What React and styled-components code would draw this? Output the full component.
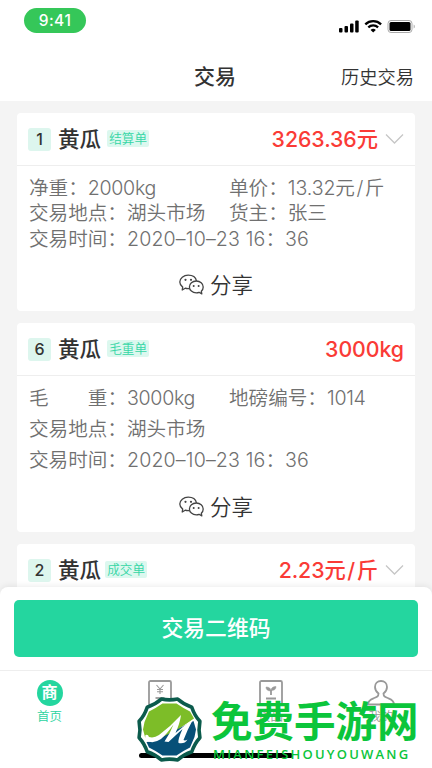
import React from 'react';
import styled, { createGlobalStyle } from 'styled-components';

const GlobalStyle = createGlobalStyle`
  * {
    box-sizing: border-box;
  }

  body {
    margin: 0;
    background: #f4f4f4;
    font-family: Inter, "Noto Sans CJK SC", sans-serif;
  }
`;

const Screen = styled.div`
  position: relative;
  width: 432px;
  height: 768px;
  overflow: hidden;
  display: flex;
  flex-direction: column;
  background: #f4f4f4;
`;

const Num = styled.span`
  letter-spacing: ${({ $spacing }) => $spacing || '-0.4px'};
`;

const Slash = styled.span`
  margin: 0 ${({ $gap }) => $gap || '1.5px'};
`;

const StatusBar = styled.div`
  flex: none;
  height: 52px;
  padding: 8px 16px 0 24px;
  display: flex;
  justify-content: space-between;
  align-items: flex-start;
  background: #fff;
`;

const Time = styled.div`
  width: 62px;
  height: 25px;
  border-radius: 13px;
  background: #35c759;
  color: #fff;
  font-size: 15.5px;
  font-weight: 500;
  line-height: 26px;
  letter-spacing: 0.5px;
  text-align: center;
`;

const StatusIcons = styled.svg`
  display: block;
  margin-top: 10px;
`;

const Header = styled.header`
  flex: none;
  height: 49px;
  padding: 0 18px;
  display: grid;
  grid-template-columns: 1fr auto 1fr;
  align-items: center;
  background: #fff;
  color: #333;
`;

const Title = styled.h1`
  grid-column: 2;
  margin: 0 2px 0 0;
  font-size: 21px;
  font-weight: 500;
  line-height: 30px;
`;

const History = styled.span`
  justify-self: end;
  font-size: 18.3px;
  font-weight: 350;
  line-height: 30px;
`;

const List = styled.main`
  flex: 1;
  min-height: 0;
  padding: 12px 17px 0;
  display: flex;
  flex-direction: column;
  gap: 12px;
  overflow: hidden;
`;

const Card = styled.section`
  flex: none;
  height: ${({ $height }) => $height}px;
  border-radius: 4px;
  background: #fff;
`;

const CardHead = styled.div`
  height: 53px;
  padding: 0 11px;
  display: flex;
  align-items: center;
  border-bottom: 1px solid #eee;
`;

const Index = styled.span`
  width: 23px;
  height: 23px;
  margin-right: 7px;
  border-radius: 3px;
  background: #ddf6ee;
  color: #333;
  font-size: 16px;
  font-weight: 500;
  line-height: 23px;
  text-align: center;
`;

const Name = styled.span`
  color: #333;
  font-size: 21.6px;
  font-weight: 500;
  line-height: 30px;
`;

const Tag = styled.span`
  height: 17px;
  margin: 0 0 2px ${({ $gap }) => $gap || 6}px;
  padding: 0 2px;
  border-radius: 2px;
  background: #dcf8ef;
  color: #35d6a5;
  font-size: 12.6px;
  font-weight: 350;
  line-height: 17px;
`;

const Price = styled.span`
  margin-left: auto;
  color: #fa3b36;
  font-size: 21.3px;
  font-weight: 500;
  line-height: 30px;
`;

const Arrow = styled.svg`
  margin-left: 7px;
`;

const Details = styled.div`
  padding: ${({ $pad }) => $pad}px 12px 0;
  color: #707070;
  font-size: 19.6px;
  font-weight: 350;
  line-height: ${({ $line }) => $line}px;
`;

const Row = styled.div`
  display: grid;
  grid-template-columns: 200px 1fr;
  white-space: nowrap;
`;

const Justified = styled.span`
  display: inline-flex;
  justify-content: space-between;
  width: 78.4px;
`;

const Share = styled.div`
  margin-top: ${({ $top }) => $top}px;
  height: 30px;
  display: flex;
  justify-content: center;
  align-items: center;
  gap: 6px;
  color: #333;
  font-size: 21.5px;
  font-weight: 350;
  line-height: 30px;
`;

const Footer = styled.footer`
  position: relative;
  flex: none;
  height: 181px;
  border-radius: 8px 8px 0 0;
  background: #fff;
  box-shadow: 0 -1px 6px rgba(0, 0, 0, 0.08);
`;

const ButtonArea = styled.div`
  height: 84px;
  padding: 13px 14px 0;
  border-bottom: 1px solid #eee;
`;

const QrButton = styled.button`
  display: block;
  width: 100%;
  height: 57px;
  padding: 0;
  border: 0;
  border-radius: 5px;
  background: #24d69f;
  color: #fff;
  font-family: inherit;
  font-size: 21.8px;
  font-weight: 500;
  line-height: 57px;
`;

const Tabs = styled.nav`
  padding: 9px 0 0;
  display: grid;
  grid-template-columns: 99px 122px 99px 122px;
`;

const Tab = styled.div`
  display: flex;
  flex-direction: column;
  align-items: center;
  color: ${({ $active }) => ($active ? '#2bd3a0' : '#999')};
  font-size: 12.5px;
  font-weight: 350;
  line-height: 18px;

  svg {
    display: block;
    margin-bottom: 2px;
  }
`;

const Badge = styled.span`
  width: 26px;
  height: 26px;
  margin-bottom: 2px;
  border-radius: 50%;
  background: #24d69f;
  color: #fff;
  font-size: 16px;
  font-weight: 700;
  line-height: 25px;
  text-align: center;
`;

const HomeBar = styled.div`
  position: absolute;
  left: 139px;
  bottom: 10px;
  width: 154px;
  height: 5px;
  border-radius: 3px;
  background: #000;
`;

const Watermark = styled.div`
  position: absolute;
  left: 136px;
  bottom: 6px;
  display: flex;
  align-items: flex-start;
  gap: 10px;
`;

const WatermarkText = styled.div`
  display: flex;
  flex-direction: column;
  color: #0bc53b;
  white-space: nowrap;
`;

const SiteName = styled.span`
  height: 49px;
  margin-left: -2px;
  font-family: "Noto Sans CJK SC", sans-serif;
  font-size: 41.5px;
  font-weight: 700;
  line-height: 45px;
`;

const SitePinyin = styled.span`
  font-family: "Open Sans", sans-serif;
  font-size: 13px;
  font-weight: 600;
  line-height: 16px;
  letter-spacing: 2.2px;
`;

const Chevron = () => (
  <Arrow width="19" height="12" viewBox="0 0 19 12" fill="none" stroke="#c6c6c6" strokeWidth="1.3">
    <path d="M1 1.5 9.5 10 18 1.5" />
  </Arrow>
);

const WechatIcon = () => (
  <svg width="25" height="22" viewBox="0 0 25 22" fill="none" stroke="#444" strokeWidth="1.3" strokeLinejoin="round">
    <path d="M10.500 14.600c-1.500.2-3 .1-4.300-.4L3.200 16l.5-2.900C1.900 11.800.8 10 .8 8 .8 4.200 4.600 1.200 9.200 1.200c4.200 0 7.600 2.300 8.300 5.700" />
    <path d="M17.300 7c-3.900 0-6.900 2.600-6.900 5.900s3 5.900 6.900 5.900c1 0 2-.2 2.800-.5l2.700 1.600-.5-2.700c1.200-1.100 1.900-2.600 1.900-4.300C24.200 9.600 21.200 7 17.300 7z" />
    <g fill="#444" stroke="none">
      <circle cx="6.500" cy="5.800" r="1.100" />
      <circle cx="12" cy="5.800" r="1.100" />
      <circle cx="14.700" cy="12" r="1" />
      <circle cx="19.600" cy="12" r="1" />
    </g>
  </svg>
);

const ShareRow = ({ top }) => (
  <Share $top={top}>
    <WechatIcon />
    <span>分享</span>
  </Share>
);

const CardTop = ({ index, tag, tagGap, children, arrow }) => (
  <CardHead>
    <Index>{index}</Index>
    <Name>黄瓜</Name>
    <Tag $gap={tagGap}>{tag}</Tag>
    <Price>{children}</Price>
    {arrow && <Chevron />}
  </CardHead>
);

const Logo = () => (
  <svg width="67" height="65" viewBox="-33.500 -32.500 67 65">
    <path
      d="M30.400 8.200Q25 14 22.300 22.300Q14.300 25 8.200 30.400Q0 28.800-8.200 30.400Q-14.300 25-22.300 22.300Q-25 14-30.400 8.200Q-28.800 0-30.400-8.200Q-25-14-22.300-22.300Q-14.300-25-8.200-30.400Q0-28.800 8.200-30.400Q14.300-25 22.300-22.300Q25-14 30.400-8.200Q28.800 0 30.400 8.200Z"
      fill="#fff"
      stroke="#0b5b4c"
      strokeWidth="3.600"
      strokeLinejoin="round"
    />
    <path d="M-24.500 7.500-26.500 0-25-7.500-20.500-18-14-21.500-7-26H7l7 4.500 6.500 3.500 4 7-22 15-14 13z" fill="#7dbd28" />
    <path d="M24-8.500 26.500 0 25 7.500 20.500 18 14 21.500 7 26H-7l-7-4.500-6.500-3.500-2.500-5.500q8 0 14-4z" fill="#075078" />
    <path
      d="M-24 5.500q2.500-1 3.500 2 5 1.500 10-2Q1-3 11.500-14.500q-1 8-5.500 18 8-7 17.500-13.500Q18 0 14 10.500q1.500 1 4-.5-3 5-9 3.500-1-3 4-14Q7 5-1 12.500l-4-.5Q1 3 4-5-3 5-8.500 9.500-16 14.500-22 11.500-25 9-24 5.500Z"
      fill="#fff"
    />
  </svg>
);

const App = () => {
  return (
    <Screen>
      <GlobalStyle />
      <StatusBar>
        <Time>9:41</Time>
        <StatusIcons width="78" height="16" viewBox="0 0 78 16">
          <rect x="1" y="10" width="3.500" height="4.500" rx="1" />
          <rect x="6.500" y="8" width="3.500" height="6.500" rx="1" />
          <rect x="12" y="5.500" width="3.500" height="9" rx="1" />
          <rect x="17.200" y="2.500" width="3.500" height="12" rx="1" />
          <g fill="none" stroke="#000" strokeWidth="2.300">
            <path d="M27.300 6.300c4.500-4.200 11.300-4.200 15.800 0" />
            <path d="M30.300 9.400c2.800-2.600 7-2.600 9.800 0" />
          </g>
          <path d="m35.200 14.500-2.600-2.600c1.500-1.400 3.700-1.400 5.200 0z" />
          <rect x="50" y="2.500" width="24" height="12" rx="3" fill="none" stroke="#aaa" />
          <rect x="51.500" y="4" width="21" height="9" rx="1.500" />
          <path d="M75.700 6.500v4c1.500-.8 1.500-3.200 0-4z" fill="#aaa" />
        </StatusIcons>
      </StatusBar>
      <Header>
        <Title>交易</Title>
        <History>历史交易</History>
      </Header>

      <List>
        <Card $height={198}>
          <CardTop index="1" tag="结算单" arrow>
            <Num $spacing="-0.05px">3263.36</Num>元
          </CardTop>
          <Details $pad={10} $line={25.3}>
            <Row>
              <span>净重：<Num $spacing="-0.3px">2000kg</Num></span>
              <span>单价：<Num $spacing="-0.1px">13.32</Num>元<Slash>/</Slash>斤</span>
            </Row>
            <Row>
              <span>交易地点：湖头市场</span>
              <span>货主：张三</span>
            </Row>
            <Row>
              <span>交易时间：<Num $spacing="0.15px">2020–10–23 16</Num>：<Num $spacing="0">36</Num></span>
            </Row>
          </Details>
          <ShareRow top={18} />
        </Card>

        <Card $height={209}>
          <CardTop index="6" tag="毛重单">
            <Num $spacing="-0.05px">3000kg</Num>
          </CardTop>
          <Details $pad={7} $line={31}>
            <Row>
              <span>
                <Justified>
                  <span>毛</span>
                  <span>重</span>
                </Justified>
                ：<Num $spacing="-0.3px">3000kg</Num>
              </span>
              <span>地磅编号：<Num $spacing="-0.3px">1014</Num></span>
            </Row>
            <Row>
              <span>交易地点：湖头市场</span>
            </Row>
            <Row>
              <span>交易时间：<Num $spacing="0.15px">2020–10–23 16</Num>：<Num $spacing="0">36</Num></span>
            </Row>
          </Details>
          <ShareRow top={16} />
        </Card>

        <Card $height={198}>
          <CardTop index="2" tag="成交单" tagGap={4} arrow>
            <Num $spacing="-0.05px">2.23</Num>元<Slash>/</Slash>斤
          </CardTop>
        </Card>
      </List>

      <Footer>
        <ButtonArea>
          <QrButton>交易二维码</QrButton>
        </ButtonArea>
        <Tabs>
          <Tab $active>
            <Badge>商</Badge>
            <span>首页</span>
          </Tab>
          <Tab>
            <svg width="24" height="26" viewBox="0 0 24 26" fill="none" stroke="#999" strokeWidth="1.800">
              <rect x="1" y="1" width="22" height="24" rx="1.500" />
              <path d="m8.500 5 3.500 4 3.500-4M12 9v5M9 9.500h6M9 11.800h6" strokeWidth="1.100" />
              <path d="M7.500 18h9" />
            </svg>
            <span>交易</span>
          </Tab>
          <Tab>
            <svg width="24" height="26" viewBox="0 0 24 26" fill="none" stroke="#999" strokeWidth="1.800">
              <rect x="1" y="1" width="22" height="24" rx="1.500" />
              <path d="M12 15V10M7 18.500h10" />
              <path d="M12 11c-3.500 0-5-1.500-5-4 3 0 5 1.200 5 4zM12 10.500c0-2.500 2-4 5-4 0 2.800-1.500 4-5 4z" fill="#999" strokeWidth=".5" />
            </svg>
            <span>货品</span>
          </Tab>
          <Tab>
            <svg width="28" height="26" viewBox="0 0 28 26" fill="none" stroke="#999" strokeWidth="1.800">
              <path d="M11.500 13.500C9.500 12 8 9.500 8 7c0-3.500 2.500-6 6-6s6 2.500 6 6c0 2.500-1.500 5-3.500 6.500 0 3 1.500 3.500 5 4.800 3.500 1.300 5.500 2.500 5.500 6.200H1c0-3.700 2-4.900 5.500-6.200 3.500-1.300 5-1.800 5-4.800z" />
            </svg>
            <span>我的</span>
          </Tab>
        </Tabs>
        <HomeBar />
        <Watermark>
          <Logo />
          <WatermarkText>
            <SiteName>免费手游网</SiteName>
            <SitePinyin>MIANFEISHOUYOUWANG</SitePinyin>
          </WatermarkText>
        </Watermark>
      </Footer>
    </Screen>
  );
};

export default App;
